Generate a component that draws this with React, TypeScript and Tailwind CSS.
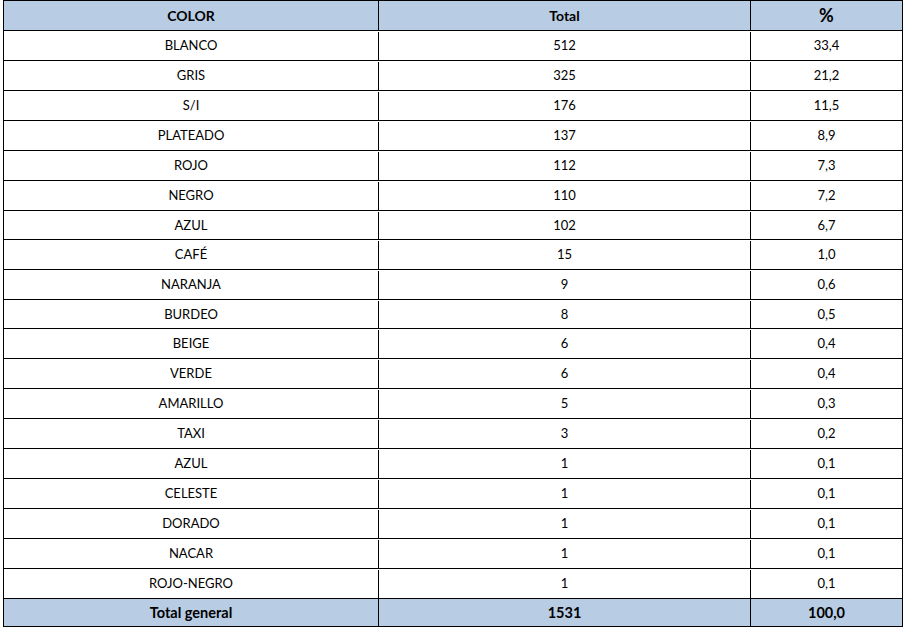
const rows: [string, string, string, string][] = [
  ["BLANCO", "512", "33,4", "h-[30px]"],
  ["GRIS", "325", "21,2", "h-[30px]"],
  ["S/I", "176", "11,5", "h-[30px]"],
  ["PLATEADO", "137", "8,9", "h-[30px]"],
  ["ROJO", "112", "7,3", "h-[30px]"],
  ["NEGRO", "110", "7,2", "h-[30px]"],
  ["AZUL", "102", "6,7", "h-[29px]"],
  ["CAFÉ", "15", "1,0", "h-[30px]"],
  ["NARANJA", "9", "0,6", "h-[30px]"],
  ["BURDEO", "8", "0,5", "h-[29px]"],
  ["BEIGE", "6", "0,4", "h-[30px]"],
  ["VERDE", "6", "0,4", "h-[30px]"],
  ["AMARILLO", "5", "0,3", "h-[30px]"],
  ["TAXI", "3", "0,2", "h-[30px]"],
  ["AZUL", "1", "0,1", "h-[30px]"],
  ["CELESTE", "1", "0,1", "h-[30px]"],
  ["DORADO", "1", "0,1", "h-[30px]"],
  ["NACAR", "1", "0,1", "h-[30px]"],
  ["ROJO-NEGRO", "1", "0,1", "h-[30px]"],
];

function Row({
  cells,
  height,
  head = false,
}: {
  cells: [string, string, string];
  height: string;
  head?: boolean;
}) {
  const look = head
    ? "bg-[#b8cce4] font-bold text-[14.5px]"
    : "bg-white text-[13px] pt-px";
  return (
    <div className={`flex ${height} border-b border-black ${look}`}>
      <div className="w-[375px] flex items-center justify-center border-r border-black">
        {cells[0]}
      </div>
      <div className="w-[372px] flex items-center justify-center border-r border-black">
        {cells[1]}
      </div>
      <div className="w-[151px] flex items-center justify-center">{cells[2]}</div>
    </div>
  );
}

export default function App() {
  return (
    <div className="w-[911px] h-[631px] bg-white font-['Lato',sans-serif] text-black">
      <div className="ml-[3px] w-[900px] border-t border-l border-r border-black">
        <div className="flex h-[30px] border-b border-black bg-[#b8cce4] font-bold text-[14px]">
          <div className="w-[375px] flex items-center justify-center border-r border-black">
            COLOR
          </div>
          <div className="w-[372px] flex items-center justify-center border-r border-black">
            Total
          </div>
          <div className="w-[151px] flex items-center justify-center text-[18px]">%</div>
        </div>
        {rows.map((r, i) => (
          <Row key={i} cells={[r[0], r[1], r[2]]} height={r[3]} />
        ))}
        <Row cells={["Total general", "1531", "100,0"]} height="h-[28px]" head />
      </div>
    </div>
  );
}
